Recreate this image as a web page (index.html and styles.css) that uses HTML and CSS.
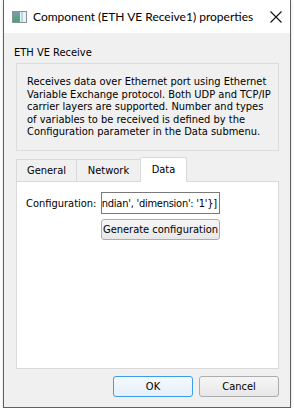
FILE: index.html
```html
<!DOCTYPE html>
<html lang="en">

<head>
    <meta charset="UTF-8">
    <title>Component (ETH VE Receive1) properties</title>
    <link rel="stylesheet" href="styles.css">
</head>

<body>
    <div class="window">
        <div class="titlebar">
            <svg class="app-icon" width="15" height="12" viewBox="0 0 15 12">
                <defs>
                    <linearGradient id="g1" x1="0" y1="0" x2="0" y2="1">
                        <stop offset="0" stop-color="#7f9cb0"/>
                        <stop offset="1" stop-color="#3fa86a"/>
                    </linearGradient>
                </defs>
                <rect x="0.5" y="0.5" width="14" height="11" fill="#eef2f4" stroke="#8a9196"/>
                <rect x="1" y="1" width="7" height="10" fill="url(#g1)"/>
                <rect x="9" y="1" width="2" height="10" fill="#b9d5ea"/>
            </svg>
            <span class="title">Component (ETH VE Receive1) properties</span>
            <svg class="close" width="12" height="12" viewBox="0 0 12 12">
                <path d="M0.5 0.5 L11.5 11.5 M11.5 0.5 L0.5 11.5" stroke="#111" stroke-width="1.1"/>
            </svg>
        </div>
        <div class="content">
            <div class="comp-name">ETH VE Receive</div>
            <div class="desc">
                Receives data over Ethernet port using Ethernet<br>
                Variable Exchange protocol. Both UDP and TCP/IP<br>
                carrier layers are supported. Number and types<br>
                of variables to be received is defined by the<br>
                Configuration parameter in the Data submenu.
            </div>
            <div class="tabs">
                <div class="tab tab-general">General</div>
                <div class="tab tab-network">Network</div>
                <div class="tab tab-data active">Data</div>
            </div>
            <div class="pane">
                <div class="row">
                    <span class="label">Configuration:</span>
                    <div class="field">ndian', 'dimension': '1'}]</div>
                </div>
                <div class="row">
                    <button class="btn gen">Generate configuration</button>
                </div>
            </div>
            <div class="buttons">
                <button class="btn ok">OK</button>
                <button class="btn">Cancel</button>
            </div>
        </div>
    </div>
</body>

</html>
```
FILE: styles.css
```css
* {
    box-sizing: border-box;
}

body {
    margin: 0;
    background-color: #fff;
    font-family: 'DejaVu Sans Condensed', 'DejaVu Sans', sans-serif;
    font-size: 11px;
    color: #000;
}

.window {
    margin-left: 3px;
    width: 288px;
    height: 408px;
    border: 1px solid #5f5f5f;
    border-top: none;
    background-color: #f0f0f0;
    box-shadow: 0 1px 3px rgba(0, 0, 0, 0.15);
    display: flex;
    flex-direction: column;
}

.titlebar {
    height: 33px;
    flex-shrink: 0;
    background-color: #fff;
    display: flex;
    align-items: center;
    padding-left: 8px;
}

.app-icon {
    margin-right: 6px;
    flex-shrink: 0;
}

.title {
    font-family: 'Lato', sans-serif;
    font-size: 12px;
    white-space: nowrap;
    flex: 1;
}

.close {
    margin-right: 8px;
    flex-shrink: 0;
}

.content {
    flex: 1;
    padding: 0 11px 0 12px;
    display: flex;
    flex-direction: column;
}

.comp-name {
    margin: 13px 0 0 -2px;
    line-height: 14px;
}

.desc {
    margin-top: 3px;
    height: 88px;
    border: 1px solid #dcdcdc;
    padding: 12px 0 0 10px;
    line-height: 12.5px;
}

.tabs {
    margin-top: 6px;
    height: 24px;
    display: flex;
    align-items: flex-end;
}

.tab {
    height: 22px;
    line-height: 22px;
    text-align: center;
    border: 1px solid #d9d9d9;
    border-bottom: none;
}

.tab-general {
    width: 61px;
}

.tab-network {
    width: 64px;
    border-left: none;
}

.tab-data {
    width: 47px;
    margin-left: -1px;
}

.tab.active {
    height: 25px;
    line-height: 24px;
    background-color: #fff;
    border-radius: 2px 2px 0 0;
    margin-bottom: -1px;
    position: relative;
}

.pane {
    height: 188px;
    background-color: #fff;
    border: 1px solid #d9d9d9;
    padding-top: 10px;
}

.row {
    display: flex;
    align-items: center;
    padding-left: 84px;
    margin-bottom: 5px;
}

.label {
    width: 84px;
    margin-left: -84px;
    padding-left: 9px;
    flex-shrink: 0;
}

.field {
    width: 119px;
    height: 22px;
    border: 1px solid #7a7a7a;
    overflow: hidden;
    display: flex;
    justify-content: flex-end;
    align-items: center;
    white-space: nowrap;
    padding-right: 2px;
    letter-spacing: -0.25px;
}

.btn {
    font-family: 'DejaVu Sans Condensed', 'DejaVu Sans', sans-serif;
    font-size: 11px;
    color: #000;
    background: linear-gradient(#f6f6f6, #e7e7e7);
    border: 1px solid #acacac;
    border-radius: 3px;
    padding: 0;
    height: 21px;
}

.gen {
    width: 119px;
}

.buttons {
    margin-top: 7px;
    display: flex;
    justify-content: flex-end;
    gap: 6px;
}

.buttons .btn {
    width: 80px;
}

.btn.ok {
    border-color: #3c9cf0;
    background: linear-gradient(#f4f9fd, #e5f0fa);
}
```
